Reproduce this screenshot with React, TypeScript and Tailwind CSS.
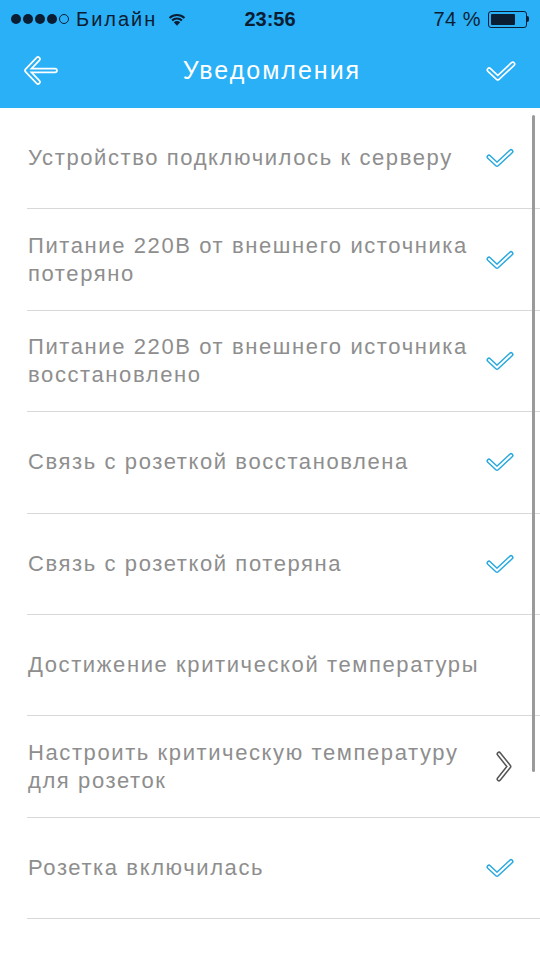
const items: { text: string; icon: 'check' | 'none' | 'chevron' }[] = [
  { text: 'Устройство подключилось к серверу', icon: 'check' },
  { text: 'Питание 220В от внешнего источника потеряно', icon: 'check' },
  { text: 'Питание 220В от внешнего источника восстановлено', icon: 'check' },
  { text: 'Связь с розеткой восстановлена', icon: 'check' },
  { text: 'Связь с розеткой потеряна', icon: 'check' },
  { text: 'Достижение критической температуры', icon: 'none' },
  { text: 'Настроить критическую температуру для розеток', icon: 'chevron' },
  { text: 'Розетка включилась', icon: 'check' },
];

// контурная галочка: толстая линия + тонкая линия цветом фона поверх
function OutlineCheck({ outer, inner, w = 28, h = 20 }: { outer: string; inner: string; w?: number; h?: number }) {
  return (
    <svg width={w} height={h} viewBox="0 0 28 20" fill="none">
      <path d="M3 9 L11 16.5 L25 3.5" stroke={outer} strokeWidth={5} strokeLinecap="round" strokeLinejoin="round" />
      <path d="M3 9 L11 16.5 L25 3.5" stroke={inner} strokeWidth={2} strokeLinecap="round" strokeLinejoin="round" />
    </svg>
  );
}

function OutlineArrow() {
  return (
    <svg width={34} height={30} viewBox="0 0 34 30" fill="none">
      <path d="M14 3 L3 14.5 L14 26 M3 14.5 L31 14.5" stroke="#ffffff" strokeWidth={5.5} strokeLinecap="round" strokeLinejoin="round" />
      <path d="M14 3 L3 14.5 L14 26 M3 14.5 L31 14.5" stroke="#29b0f7" strokeWidth={2.2} strokeLinecap="round" strokeLinejoin="round" />
    </svg>
  );
}

function OutlineChevron() {
  return (
    <svg width={20} height={32} viewBox="0 0 20 32" fill="none">
      <path d="M5 3 L15 15.5 L5 28" stroke="#555" strokeWidth={5} strokeLinecap="round" strokeLinejoin="round" />
      <path d="M5 3 L15 15.5 L5 28" stroke="#ffffff" strokeWidth={2} strokeLinecap="round" strokeLinejoin="round" />
    </svg>
  );
}

function Wifi() {
  return (
    <svg width={20} height={16} viewBox="0 0 22 16" fill="#0b1d33">
      <path d="M11 15.5 L7.5 11.6 a5 5 0 0 1 7 0 Z" />
      <path d="M4.8 8.8 a9 9 0 0 1 12.4 0 l-1.6 1.7 a6.7 6.7 0 0 0 -9.2 0 Z" />
      <path d="M2 6 a13 13 0 0 1 18 0 l-1.6 1.7 a10.7 10.7 0 0 0 -14.8 0 Z" />
    </svg>
  );
}

export default function App() {
  return (
    <div className="relative w-[540px] h-[960px] bg-white overflow-hidden" style={{ fontFamily: '"Liberation Sans", Arial, sans-serif' }}>
      {/* шапка */}
      <div className="bg-[#29b0f7] h-[108px] flex flex-col">
        <div className="h-[38px] grid grid-cols-[1fr_auto_1fr] items-center px-[11px] text-[#0b1d33] text-[20px]">
          <div className="flex items-center">
            <div className="flex items-center gap-[2px]">
              {[0, 1, 2, 3].map((i) => (
                <span key={i} className="w-[10px] h-[10px] rounded-full bg-[#0b1d33]" />
              ))}
              <span className="w-[10px] h-[10px] rounded-full border border-[#0b1d33]" />
            </div>
            <span className="ml-[7px] tracking-[2px]">Билайн</span>
            <span className="ml-[10px]"><Wifi /></span>
          </div>
          <span className="font-bold text-[20px]">23:56</span>
          <div className="flex items-center justify-end">
            <span className="tracking-[0.5px]">74 %</span>
            <div className="ml-[7px] flex items-center">
              <div className="w-[39px] h-[17px] border border-[#0b1d33] rounded-[3px] p-[2px]">
                <div className="h-full w-[72%] bg-[#0b1d33] rounded-[1px]" />
              </div>
              <div className="w-[2px] h-[6px] bg-[#0b1d33] rounded-r-sm" />
            </div>
          </div>
        </div>
        <div className="flex-1 flex items-center justify-between px-[24px] pb-[4px]">
          <OutlineArrow />
          <span className="text-white text-[25px] tracking-[2px]">Уведомления</span>
          <OutlineCheck outer="#ffffff" inner="#29b0f7" w={30} h={22} />
        </div>
      </div>

      {/* список */}
      <div className="flex flex-col">
        {items.map((it) => (
          <div key={it.text} className="ml-[27px] h-[101.4px] border-b border-[#d8d8d8] flex items-center pr-[26px]">
            <span className="flex-1 pl-[1px] text-[22px] tracking-[1.6px] leading-[28px] text-[#8e8e8e] pr-[8px]">{it.text}</span>
            {it.icon === 'check' && <OutlineCheck outer="#2aa9dc" inner="#ffffff" />}
            {it.icon === 'chevron' && <OutlineChevron />}
          </div>
        ))}
      </div>

      {/* индикатор прокрутки */}
      <div className="absolute left-[532px] top-[115px] w-[3px] h-[657px] rounded-full bg-[#9a9a9a]" />
    </div>
  );
}
